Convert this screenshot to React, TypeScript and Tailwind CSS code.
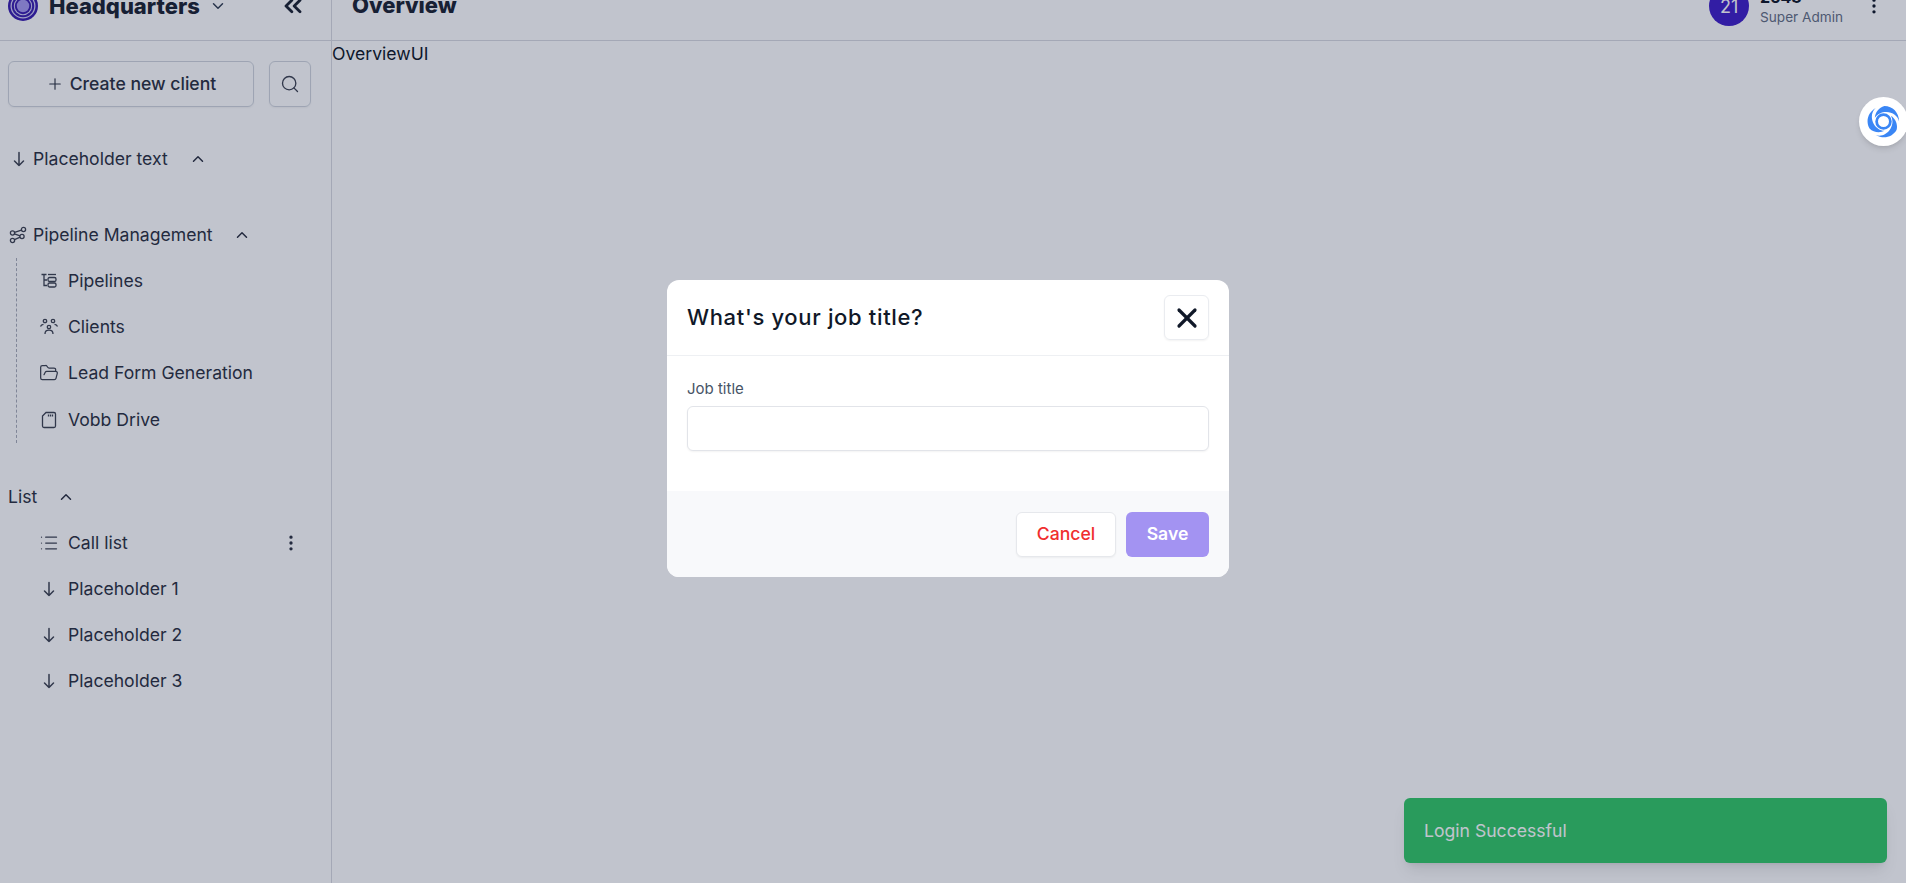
import { ChevronDown, ChevronUp, ChevronsLeft, EllipsisVertical, FolderOpen, List, Plus, Search, X } from "lucide-react";

const Spiral = () => (
  <svg viewBox="0 0 36 36" className="h-[30px] w-[30px]">
    <circle cx="18" cy="18" r="18" fill="#3b1fb0" />
    <circle cx="18" cy="18" r="15" fill="#d4d0f5" />
    <circle cx="18" cy="18" r="13.500" fill="#3b1fb0" />
    <circle cx="18" cy="18" r="11" fill="#d4d0f5" />
    <circle cx="18" cy="18" r="9.800" fill="#3b1fb0" />
    <circle cx="18" cy="18" r="7.500" fill="#a79bf0" />
  </svg>
);

const DownArrow = () => (
  <svg viewBox="0 0 18 18" className="h-[18px] w-[18px]" fill="none" stroke="currentColor" strokeWidth="1.500" strokeLinecap="round" strokeLinejoin="round">
    <path d="M9 2.500v13M4.500 11l4.500 4.500 4.500-4.500" />
  </svg>
);
const FlowIcon = () => (
  <svg viewBox="0 0 18 18" className="h-[18px] w-[18px]" fill="none" stroke="currentColor" strokeWidth="1.300">
    <circle cx="14.500" cy="3.500" r="2.100" /><circle cx="3.500" cy="7" r="2.100" />
    <circle cx="3.500" cy="14.500" r="2.100" /><circle cx="13" cy="10.500" r="2.100" />
    <path d="M5.500 6.300l7-2.200M5.500 7.800l5.500 2M5.500 13.700l5.700-2.500" />
  </svg>
);
const PipelinesIcon = () => (
  <svg viewBox="0 0 20 20" className="h-5 w-5" fill="none" stroke="currentColor" strokeWidth="1.300">
    <path d="M2.500 3.500h5M5 3.500v11h3M5 9h3" />
    <rect x="9" y="6.500" width="8" height="4" rx="1.500" />
    <rect x="9" y="12" width="8" height="4" rx="1.500" />
    <path d="M9 3.500h8" />
  </svg>
);
const ClientsIcon = () => (
  <svg viewBox="0 0 20 20" className="h-5 w-5" fill="none" stroke="currentColor" strokeWidth="1.300">
    <circle cx="6" cy="4" r="1.700" /><circle cx="14" cy="4" r="1.700" /><circle cx="10" cy="10" r="1.700" />
    <path d="M1.500 9.500c.5-1.500 1.500-2.200 3-2.200M18.500 9.500c-.5-1.500-1.500-2.200-3-2.200M6 17c0-2.500 1.500-3.800 4-3.800s4 1.300 4 3.800" />
  </svg>
);
const DriveIcon = () => (
  <svg viewBox="0 0 20 20" className="h-5 w-5" fill="none" stroke="currentColor" strokeWidth="1.300">
    <path d="M7 2.500H15a1.500 1.500 0 0 1 1.500 1.500v12a1.500 1.500 0 0 1-1.500 1.500H5A1.500 1.500 0 0 1 3.500 16V6z" />
    <path d="M9.500 4.500v2M11.500 4.500v2M13.500 4.500v2" />
  </svg>
);
const Swirl = () => (
  <svg viewBox="0 0 36 36" className="h-[33px] w-[33px]" fill="#3a86f5">
    <circle cx="18" cy="18" r="7.500" fill="none" stroke="#3a86f5" strokeWidth="3" />
    {[0, 120, 240].map((r) => (
      <path key={r} transform={`rotate(${r} 18 18)`} d="M19 1C28 1 35 8 35 18C34 12 28 7.500 21 7.500C16 7.500 11.500 9.500 8.500 14C9 8 13 2.500 19 1Z" />
    ))}
  </svg>
);

const Item = ({ icon, label, extra }: { icon: React.ReactNode; label: string; extra?: React.ReactNode }) => (
  <div className="flex h-[46.2px] items-center text-[#2d3242]">
    <span className="flex w-5 justify-center text-[#3f4452]">{icon}</span>
    <span className="ml-[9px] text-[17.6px] leading-6">{label}</span>
    {extra}
  </div>
);

export default function App() {
  return (
    <div className="relative h-[883px] w-[1906px] overflow-hidden bg-white font-['Inter',sans-serif] text-[#101828]">
      <header className="-mt-[29px] flex h-[70px] items-center border-b border-[#d8dae0]">
        <div className="flex h-full w-[332px] shrink-0 items-center border-r border-[#d8dae0] pl-2">
          <Spiral />
          <span className="ml-[11px] text-[22px] font-extrabold leading-7 text-[#1d2433]">Headquarters</span>
          <ChevronDown className="ml-[9px] h-[18px] w-[18px] text-[#344054]" />
          <ChevronsLeft className="ml-[52px] h-7 w-7 text-[#1d2433]" strokeWidth={2.4} />
        </div>
        <h1 className="ml-[20px] text-[22px] font-extrabold text-[#1d2433]">Overview</h1>
        <div className="ml-auto flex items-center pr-[22px]">
          <span className="flex h-10 w-10 items-center justify-center rounded-full bg-[#4020c8] pt-[3px] text-lg text-white">21</span>
          <div className="ml-[11px] mr-[21px] flex flex-col pt-[2px]">
            <span className="text-base font-bold leading-5 text-[#101828]">2543</span>
            <span className="text-[13.6px] leading-5 text-[#667085]">Super Admin</span>
          </div>
          <EllipsisVertical className="h-5 w-5 text-[#101828]" />
        </div>
      </header>
      <div className="flex h-[842px]">
        <aside className="w-[332px] shrink-0 border-r border-[#d8dae0] px-2 pt-5">
          <div className="flex gap-[15px]">
            <button className="flex h-[46px] w-[246px] items-center justify-center rounded-md border border-[#d0d5dd] text-[17.6px] font-medium leading-6 text-[#2d3242] shadow-xs">
              <Plus className="mr-[6px] h-[18px] w-[18px]" strokeWidth={1.5} />Create new client
            </button>
            <button className="flex h-[46px] w-[42px] items-center justify-center rounded-md border border-[#d0d5dd] text-[#3f4452] shadow-xs">
              <Search className="h-5 w-5" strokeWidth={1.6} />
            </button>
          </div>
          <div className="mt-[40px] flex h-6 items-center text-[17.6px] text-[#2d3242]">
            <span className="ml-[2px] text-[#3f4452]"><DownArrow /></span>
            <span className="ml-[5px]">Placeholder text</span>
            <ChevronUp className="ml-[21px] h-[18px] w-[18px]" />
          </div>
          <div className="mt-[52px] flex h-6 items-center text-[17.6px] text-[#2d3242]">
            <span className="ml-[1px] text-[#3f4452]"><FlowIcon /></span>
            <span className="ml-[6px]">Pipeline Management</span>
            <ChevronUp className="ml-[20px] h-[18px] w-[18px]" />
          </div>
          <div className="ml-2 mt-[11px] border-l border-dashed border-[#a9adb8] pl-[22px]">
            <Item icon={<PipelinesIcon />} label="Pipelines" />
            <Item icon={<ClientsIcon />} label="Clients" />
            <Item icon={<FolderOpen className="h-5 w-5" strokeWidth={1.5} />} label="Lead Form Generation" />
            <Item icon={<DriveIcon />} label="Vobb Drive" />
          </div>
          <div className="mt-[42px] flex h-6 items-center text-[17.6px] text-[#2d3242]">
            <span>List</span>
            <ChevronUp className="ml-[20px] h-[18px] w-[18px]" />
          </div>
          <div className="ml-[31px] mt-[11px]">
            <Item icon={<List className="h-5 w-5" strokeWidth={1.5} />} label="Call list" extra={<EllipsisVertical className="ml-auto mr-[22px] h-5 w-5" />} />
            <Item icon={<DownArrow />} label="Placeholder 1" />
            <Item icon={<DownArrow />} label="Placeholder 2" />
            <Item icon={<DownArrow />} label="Placeholder 3" />
          </div>
        </aside>
        <main className="pt-[1px] text-[17.6px] leading-6 text-[#101828]">OverviewUI</main>
      </div>

      <div className="absolute bottom-[20px] right-[19px] flex h-[65px] w-[483px] items-center rounded-md bg-[#34c969] px-5 pt-[1px] text-[17.6px] text-white shadow-lg">Login Successful</div>
      <div className="absolute inset-0 bg-[#071337]/25" />

      <div className="absolute -right-[2px] top-[97px] flex h-[49px] w-[49px] items-center justify-center rounded-full bg-white shadow-md">
        <Swirl />
      </div>

      <div className="absolute left-[667px] top-[280px] w-[562px] overflow-hidden rounded-xl bg-white">
        <div className="flex h-[76px] items-center justify-between border-b border-[#eef0f3] px-[20px]">
          <h2 className="text-[22px] font-medium tracking-[0.03em] text-[#101828]">What's your job title?</h2>
          <button className="flex h-[45px] w-[45px] items-center justify-center rounded-md border border-[#eaecf0] text-[#101828] shadow-xs">
            <X className="h-8 w-8" strokeWidth={2.4} />
          </button>
        </div>
        <div className="h-[135px] px-[20px] pt-[23px]">
          <label className="block text-[15px] leading-5 text-[#475467]">Job title</label>
          <input className="mt-[7px] h-[45px] w-full rounded-md border border-[#e2e4e9] bg-white shadow-xs outline-none" />
        </div>
        <div className="flex h-[86px] items-center justify-end gap-[10px] bg-[#f8f9fb] px-[20px]">
          <button className="h-[45px] w-[100px] rounded-md border border-[#e6e8ec] bg-white pt-[1px] text-[17.6px] font-medium text-[#f02e2e] shadow-xs">Cancel</button>
          <button className="h-[45px] w-[83px] rounded-md bg-[#a393f2] pt-[1px] text-[17.6px] font-semibold text-white">Save</button>
        </div>
      </div>
    </div>
  );
}
